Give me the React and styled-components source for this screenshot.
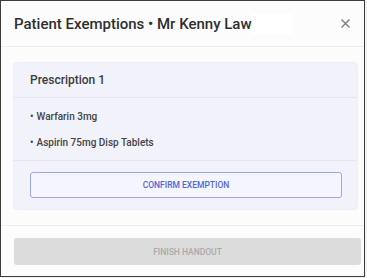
import React from 'react';
import styled, { createGlobalStyle } from 'styled-components';

const GlobalStyle = createGlobalStyle`
    body {
        margin: 0;
        background: #f3f3f3;
        font-family: Roboto, "Noto Sans", sans-serif;
    }
`;

const Modal = styled.div`
    box-sizing: border-box;
    width: 365px;
    height: 277px;
    background: #fcfcfc;
    border: 1px solid #3c3c3c;
    display: flex;
    flex-direction: column;
`;

const Header = styled.div`
    display: flex;
    align-items: center;
    justify-content: space-between;
    height: 45px;
    padding: 0 12px 0 13px;
    border-bottom: 1px solid #eeeef2;
`;

const Title = styled.h2`
    margin: 0;
    font-size: 15px;
    font-weight: 500;
    color: #2f2f2f;
    display: flex;
    align-items: center;
`;

const Blank = styled.span`
    display: inline-block;
    width: 40px;
    height: 20px;
    background: #fff;
`;

const Close = styled.button`
    border: 0;
    background: none;
    padding: 0;
    width: 14px;
    height: 14px;
    display: flex;
    align-items: center;
    justify-content: center;
    cursor: pointer;
`;

const Body = styled.div`
    padding: 15px 6px 15px 12px;
    border-bottom: 1px solid #eeeef2;
`;

const Card = styled.div`
    background: #f1f2fa;
    border: 1px solid #eceef8;
    border-radius: 4px;
`;

const CardTitle = styled.div`
    height: 34px;
    display: flex;
    align-items: center;
    padding-left: 16px;
    font-size: 12px;
    font-weight: 500;
    color: #3c3c3c;
    border-bottom: 1px solid #e4e6f1;
`;

const List = styled.ul`
    list-style: none;
    margin: 0;
    padding: 5px 16px 5px;
    border-bottom: 1px solid #e4e6f1;
`;

const Item = styled.li`
    font-size: 10px;
    font-weight: 500;
    color: #444;
    height: 26px;
    display: flex;
    align-items: center;
    &::before {
        content: '•';
        margin-right: 3px;
    }
`;

const Actions = styled.div`
    padding: 11px 15px 11px 16px;
`;

const Button = styled.button`
    width: 100%;
    height: ${p => p.$tall ? 27 : 26}px;
    border-radius: 3px;
    font-family: Roboto, "Noto Sans", sans-serif;
    font-size: 8.5px;
    font-weight: 500;
    text-transform: uppercase;
    border: ${p => p.$outline ? '1.5px solid #9aa6f2' : '0'};
    background: ${p => p.$outline ? '#f4f5fd' : '#dcdcdc'};
    color: ${p => p.$outline ? '#5566d6' : '#aaaaaa'};
`;

const Footer = styled.div`
    padding: 12px 3px 0 13px;
`;

export default function App() {
    return (
        <>
            <GlobalStyle />
            <Modal>
                <Header>
                    <Title>Patient Exemptions • Mr Kenny Law<Blank /></Title>
                    <Close>
                        <svg width="9" height="9" viewBox="0 0 9 9">
                            <path d="M0.5 0.5 L8.5 8.5 M8.5 0.5 L0.5 8.5" stroke="#7a7a7a" strokeWidth="1.3" />
                        </svg>
                    </Close>
                </Header>
                <Body>
                    <Card>
                        <CardTitle>Prescription 1</CardTitle>
                        <List>
                            <Item>Warfarin 3mg</Item>
                            <Item>Aspirin 75mg Disp Tablets</Item>
                        </List>
                        <Actions>
                            <Button $outline>Confirm Exemption</Button>
                        </Actions>
                    </Card>
                </Body>
                <Footer>
                    <Button $tall disabled>Finish Handout</Button>
                </Footer>
            </Modal>
        </>
    );
}
